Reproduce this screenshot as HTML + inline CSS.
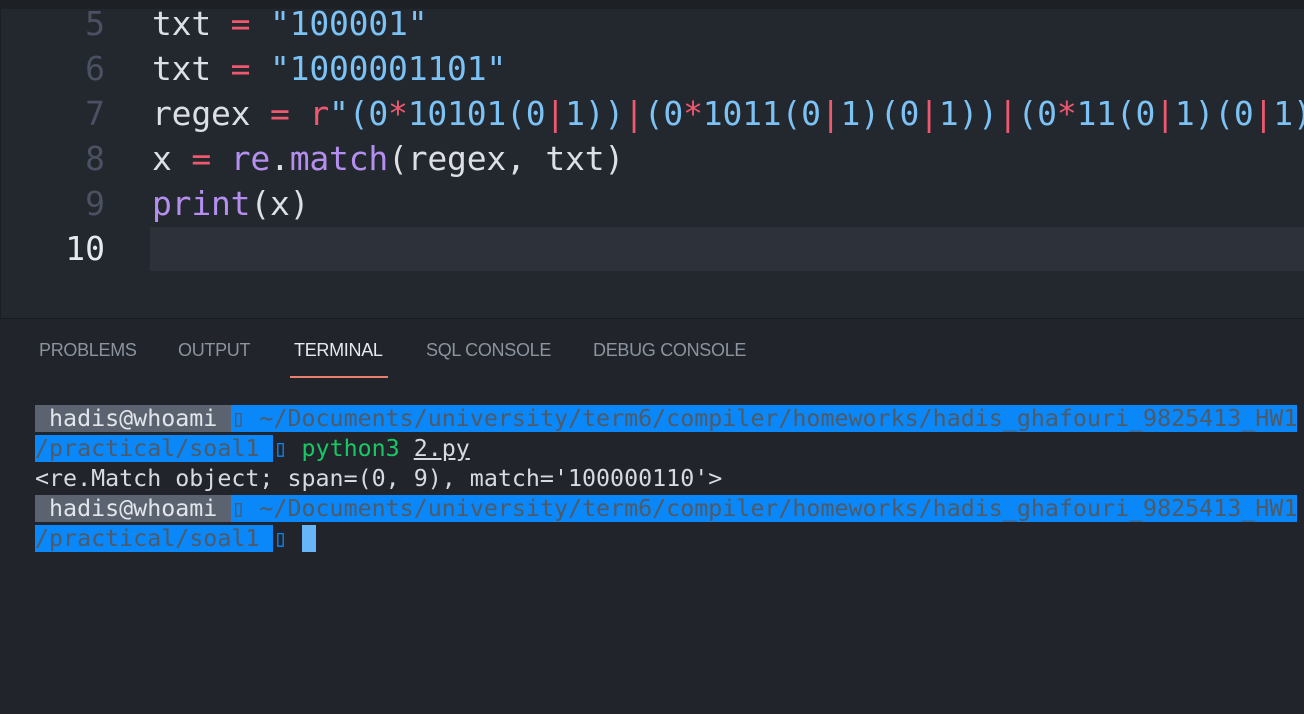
<!DOCTYPE html>
<html><head><meta charset="utf-8"><style>
body{margin:0;width:1304px;height:714px;overflow:hidden;background:#21252b;position:relative;font-family:"DejaVu Sans Mono","Liberation Mono",monospace}
.top{position:absolute;left:0;top:0;width:1304px;height:9px;background:#1d2025}
.ed{position:absolute;left:0;top:9px;width:1304px;height:309px;background:#23272e;border-left:1px solid #1b1e23}
.cur{position:absolute;left:149px;top:218px;width:1155px;height:44px;background:#2c313a}
.ln{position:absolute;left:0;width:104px;text-align:right;font-size:33px;color:#495162;line-height:45px}
.code{position:absolute;left:151px;font-size:33px;color:#dcdfe4;line-height:45px;white-space:pre;letter-spacing:-0.2px}
.s{color:#7cc2f4}.o{color:#ef596f}.f{color:#b58ff0}
.sep{position:absolute;left:0;top:318px;width:1304px;height:1px;background:#181a1f}
.tab{position:absolute;top:340px;font-family:"Liberation Sans",sans-serif;font-size:18px;color:#8b939e;letter-spacing:-0.3px}
.ul{position:absolute;left:290px;top:376px;width:98px;height:2px;background:#e8806e}
.t{position:absolute;left:35px;font-size:23.3px;line-height:30px;white-space:pre;color:#d7dae0}
.b{background:#0a87f8;color:#4f5a66}.g{background:#5c6370;color:#e2e5ea}
</style></head><body>
<div class="top"></div>
<div class="ed">
<div class="cur"></div>
<div class="ln" style="top:-8px">5</div>
<div class="ln" style="top:37px">6</div>
<div class="ln" style="top:82px">7</div>
<div class="ln" style="top:127px">8</div>
<div class="ln" style="top:172px">9</div>
<div class="ln" style="top:217px;color:#e6e9ee">10</div>
<div class="code" style="top:-8px">txt <span class="o">=</span> <span class="s">"100001"</span></div>
<div class="code" style="top:37px">txt <span class="o">=</span> <span class="s">"1000001101"</span></div>
<div class="code" style="top:82px">regex <span class="o">=</span> <span class="o">r</span><span class="s">"(0<span class="o">*</span>10101(0<span class="o">|</span>1))<span class="o">|</span>(0<span class="o">*</span>1011(0<span class="o">|</span>1)(0<span class="o">|</span>1))<span class="o">|</span>(0<span class="o">*</span>11(0<span class="o">|</span>1)(0<span class="o">|</span>1)</span></div>
<div class="code" style="top:127px">x <span class="o">=</span> <span class="f">re</span>.<span class="f">match</span>(regex, txt)</div>
<div class="code" style="top:172px"><span class="f">print</span>(x)</div>
</div>
<div class="sep"></div>
<div class="tab" style="left:39px">PROBLEMS</div>
<div class="tab" style="left:178px">OUTPUT</div>
<div class="tab" style="left:294px;color:#e6e9ee">TERMINAL</div>
<div class="tab" style="left:426px">SQL CONSOLE</div>
<div class="tab" style="left:593px">DEBUG CONSOLE</div>
<div class="ul"></div>
<div class="t" style="top:404px"><span class="g"> hadis@whoami </span><span class="b">▯ ~/Documents/university/term6/compiler/homeworks/hadis_ghafouri_9825413_HW1</span></div>
<div class="t" style="top:434px"><span class="b">/practical/soal1 </span><span style="color:#0a87f8">▯</span> <span style="color:#17c964">python3</span> <span style="text-decoration:underline">2.py</span></div>
<div class="t" style="top:464px">&lt;re.Match object; span=(0, 9), match='100000110'&gt;</div>
<div class="t" style="top:494px"><span class="g"> hadis@whoami </span><span class="b">▯ ~/Documents/university/term6/compiler/homeworks/hadis_ghafouri_9825413_HW1</span></div>
<div class="t" style="top:524px"><span class="b">/practical/soal1 </span><span style="color:#0a87f8">▯</span> <span style="background:#66b6f7"> </span></div>
</body></html>
